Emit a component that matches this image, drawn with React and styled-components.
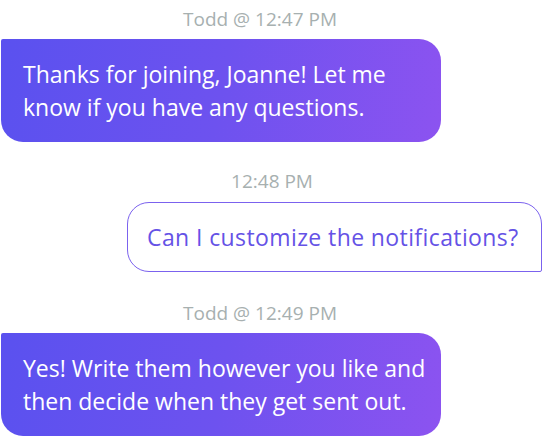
import React from 'react';
import styled, { createGlobalStyle } from 'styled-components';

const GlobalStyle = createGlobalStyle`
  body {
    margin: 0;
    background: #ffffff;
    font-family: 'Open Sans', 'Liberation Sans', sans-serif;
  }
`;

const Thread = styled.main`
  width: 544px;
  height: 445px;
  display: flex;
  flex-direction: column;
  overflow: hidden;
`;

const Stamp = styled.div`
  font-size: 19px;
  line-height: 22px;
  color: #a7b0b0;
  text-align: center;
  padding-right: ${(props) => (props.shift ? '24px' : '0')};
  margin-top: ${(props) => props.top}px;
  margin-bottom: ${(props) => props.bottom}px;
`;

const Bubble = styled.div`
  box-sizing: border-box;
  width: 440px;
  height: 103px;
  margin-left: 1px;
  padding: 19px 22px 0;
  font-size: 23px;
  line-height: 33px;
  color: #ffffff;
  white-space: nowrap;
  background: linear-gradient(100deg, #5a51ef 0%, #6d52ef 50%, #8c53f0 100%);
  border-radius: 2px 22px 22px 22px;
`;

const OutlineBubble = styled.div`
  box-sizing: border-box;
  align-self: flex-end;
  width: 415px;
  height: 70px;
  margin-right: 2px;
  padding: 18px 19px 0;
  font-size: 23px;
  line-height: 33px;
  letter-spacing: 0.4px;
  color: #6552e6;
  white-space: nowrap;
  border: 1.5px solid #7b62ee;
  border-radius: 22px 22px 2px 22px;
  background: #ffffff;
`;

const App = () => {
  return (
    <Thread>
      <GlobalStyle />
      <Stamp top={8} bottom={9} shift>Todd @ 12:47 PM</Stamp>
      <Bubble>
        Thanks for joining, Joanne! Let me
        <br />
        know if you have any questions.
      </Bubble>
      <Stamp top={28} bottom={10}>12:48 PM</Stamp>
      <OutlineBubble>Can I customize the notifications?</OutlineBubble>
      <Stamp top={30} bottom={9} shift>Todd @ 12:49 PM</Stamp>
      <Bubble>
        Yes! Write them however you like and
        <br />
        then decide when they get sent out.
      </Bubble>
    </Thread>
  );
};

export default App;
